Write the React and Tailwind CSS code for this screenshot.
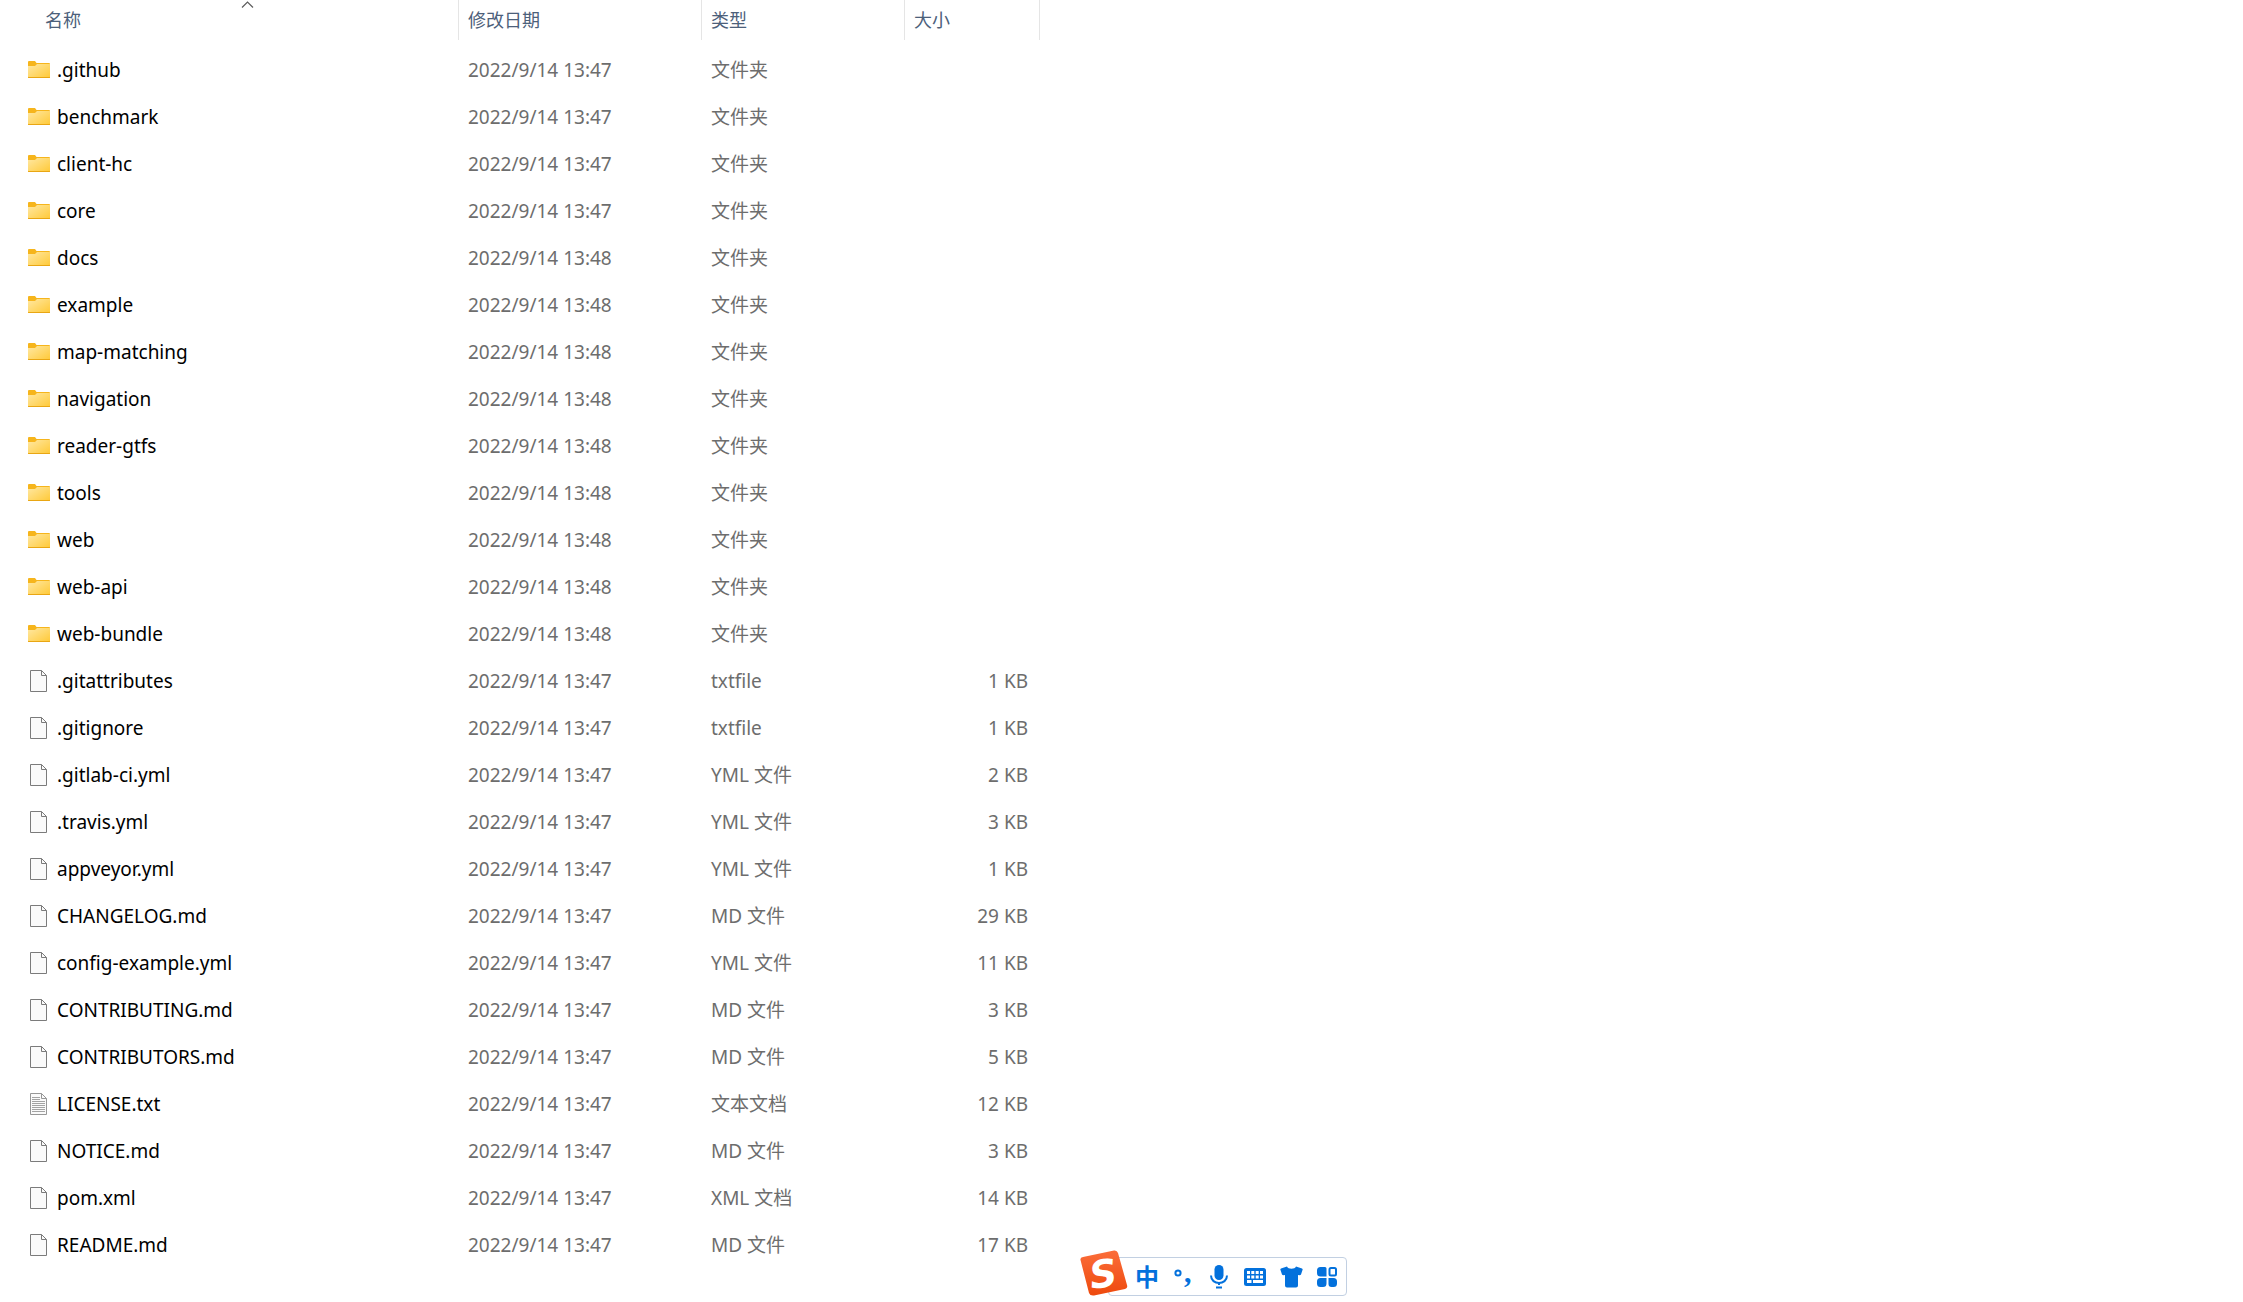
import React from 'react';

const entries = [
  { name: '.github', date: '2022/9/14 13:47', type: '文件夹', icon: 'folder' },
  { name: 'benchmark', date: '2022/9/14 13:47', type: '文件夹', icon: 'folder' },
  { name: 'client-hc', date: '2022/9/14 13:47', type: '文件夹', icon: 'folder' },
  { name: 'core', date: '2022/9/14 13:47', type: '文件夹', icon: 'folder' },
  { name: 'docs', date: '2022/9/14 13:48', type: '文件夹', icon: 'folder' },
  { name: 'example', date: '2022/9/14 13:48', type: '文件夹', icon: 'folder' },
  { name: 'map-matching', date: '2022/9/14 13:48', type: '文件夹', icon: 'folder' },
  { name: 'navigation', date: '2022/9/14 13:48', type: '文件夹', icon: 'folder' },
  { name: 'reader-gtfs', date: '2022/9/14 13:48', type: '文件夹', icon: 'folder' },
  { name: 'tools', date: '2022/9/14 13:48', type: '文件夹', icon: 'folder' },
  { name: 'web', date: '2022/9/14 13:48', type: '文件夹', icon: 'folder' },
  { name: 'web-api', date: '2022/9/14 13:48', type: '文件夹', icon: 'folder' },
  { name: 'web-bundle', date: '2022/9/14 13:48', type: '文件夹', icon: 'folder' },
  { name: '.gitattributes', date: '2022/9/14 13:47', type: 'txtfile', size: '1 KB', icon: 'file' },
  { name: '.gitignore', date: '2022/9/14 13:47', type: 'txtfile', size: '1 KB', icon: 'file' },
  { name: '.gitlab-ci.yml', date: '2022/9/14 13:47', type: 'YML 文件', size: '2 KB', icon: 'file' },
  { name: '.travis.yml', date: '2022/9/14 13:47', type: 'YML 文件', size: '3 KB', icon: 'file' },
  { name: 'appveyor.yml', date: '2022/9/14 13:47', type: 'YML 文件', size: '1 KB', icon: 'file' },
  { name: 'CHANGELOG.md', date: '2022/9/14 13:47', type: 'MD 文件', size: '29 KB', icon: 'file' },
  { name: 'config-example.yml', date: '2022/9/14 13:47', type: 'YML 文件', size: '11 KB', icon: 'file' },
  { name: 'CONTRIBUTING.md', date: '2022/9/14 13:47', type: 'MD 文件', size: '3 KB', icon: 'file' },
  { name: 'CONTRIBUTORS.md', date: '2022/9/14 13:47', type: 'MD 文件', size: '5 KB', icon: 'file' },
  { name: 'LICENSE.txt', date: '2022/9/14 13:47', type: '文本文档', size: '12 KB', icon: 'text' },
  { name: 'NOTICE.md', date: '2022/9/14 13:47', type: 'MD 文件', size: '3 KB', icon: 'file' },
  { name: 'pom.xml', date: '2022/9/14 13:47', type: 'XML 文档', size: '14 KB', icon: 'file' },
  { name: 'README.md', date: '2022/9/14 13:47', type: 'MD 文件', size: '17 KB', icon: 'file' },
];

function FolderIcon() {
  return (
    <svg width="22" height="18" viewBox="0 0 22 18" aria-hidden="true">
      <defs>
        <linearGradient id="folder-front" x1="0" y1="0" x2="1" y2="1">
          <stop offset="0" stopColor="#ffe8a3" />
          <stop offset="1" stopColor="#ffc937" />
        </linearGradient>
      </defs>
      <path d="M0 1Q0 0 1 0H7L8.5 2H21Q22 2 22 3V8H0Z" fill="#f6b51c" />
      <path d="M0 5H7L9 3H22V16Q22 17 21 17H1Q0 17 0 16Z" fill="url(#folder-front)" />
      <path d="M0 15.5V16.5Q0 17 1 17H21Q22 17 22 16.5V15.5Q22 16 21 16H1Q0 16 0 15.5Z" fill="#e9a613" />
    </svg>
  );
}

function FileIcon({ lined }) {
  return (
    <svg width="18" height="22" viewBox="0 0 18 22" aria-hidden="true">
      <path d="M0.5 0.5H11.5L16.5 5.5V21.5H0.5Z" fill="#fafafa" stroke={lined ? '#979797' : '#7b7b7b'} />
      <path d="M11.5 0.5V5.5H16.5" fill="none" stroke={lined ? '#979797' : '#7b7b7b'} />
      {lined && (
        <path
          d="M2 4.5H10M2 6.5H10M2 8.5H15M2 10.5H15M2 12.5H15M2 14.5H15M2 16.5H15M2 18.5H15"
          stroke="#a3a3a3"
        />
      )}
    </svg>
  );
}

function HeaderCell({ label, first, sorted }) {
  return (
    <th
      scope="col"
      aria-sort={sorted ? 'ascending' : undefined}
      className="relative border-r border-[#e5e5e5] p-0 text-left font-normal"
    >
      <button
        type="button"
        className={`flex h-10 w-full items-center text-lg text-[#4c607a] ${first ? 'pl-[45px]' : 'pl-[9px]'}`}
      >
        {label}
      </button>
      {sorted && (
        <svg className="absolute top-0 left-[241px]" width="13" height="9" viewBox="0 0 13 9" aria-hidden="true">
          <path d="M1 7.5L6.5 2L12 7.5" fill="none" stroke="#5c5c5c" strokeWidth="1.2" />
        </svg>
      )}
    </th>
  );
}

function EntryRow({ entry }) {
  return (
    <tr className="h-[47px]">
      <td className="p-0 pl-7 text-black">
        <div className="flex items-center gap-[7px]">
          <span className="flex w-[22px] shrink-0 justify-center">
            {entry.icon === 'folder' ? <FolderIcon /> : <FileIcon lined={entry.icon === 'text'} />}
          </span>
          <span>{entry.name}</span>
        </div>
      </td>
      <td className="p-0 pl-[9px]">{entry.date}</td>
      <td className="p-0 pl-[9px]">{entry.type}</td>
      <td className="p-0 pr-3 text-right">{entry.size}</td>
    </tr>
  );
}

function ImeLogo() {
  return (
    <svg className="overflow-visible" width="48" height="46" viewBox="0 0 48 46" role="img" aria-label="Sogou">
      <defs>
        <linearGradient id="ime-logo" x1="0" y1="0" x2="0" y2="1">
          <stop offset="0" stopColor="#fb6d3a" />
          <stop offset="1" stopColor="#ee4a0d" />
        </linearGradient>
      </defs>
      <path
        d="M3 7L34 0.5Q37 0 38 3L47 35Q48 38 45 39L14 45.5Q10 46 9 43L0.5 10Q0 7.5 3 7Z"
        fill="url(#ime-logo)"
      />
      <text
        x="23"
        y="37"
        textAnchor="middle"
        transform="rotate(-8 24 23)"
        fill="#fff"
        fontFamily="'DejaVu Sans', sans-serif"
        fontWeight="700"
        fontStyle="italic"
        fontSize="38"
      >
        S
      </text>
    </svg>
  );
}

function PunctuationIcon() {
  return (
    <svg className="overflow-visible" width="20" height="20" viewBox="0 0 20 20" aria-hidden="true">
      <circle cx="5" cy="6" r="2.6" fill="none" stroke="currentColor" strokeWidth="2" />
      <text x="11" y="15" fill="currentColor" fontFamily="'Liberation Serif', serif" fontWeight="700" fontSize="30">
        ,
      </text>
    </svg>
  );
}

function MicIcon() {
  return (
    <svg width="18" height="24" viewBox="0 0 18 24" aria-hidden="true">
      <rect x="4.5" y="0" width="9" height="15" rx="4.5" fill="currentColor" />
      <path d="M1 10.5C1 20.5 17 20.5 17 10.5" fill="none" stroke="currentColor" strokeWidth="2" />
      <path d="M9 18V20M6 22.5H12" stroke="currentColor" strokeWidth="2" />
    </svg>
  );
}

function KeyboardIcon() {
  return (
    <svg width="22" height="18" viewBox="0 0 22 18" aria-hidden="true">
      <rect width="22" height="18" rx="2.5" fill="currentColor" />
      <path
        d="M3 3h3v3h-3zM7.300 3h3v3h-3zM11.700 3h3v3h-3zM16 3h3v3h-3zM3 7.500h3v3h-3zM7.300 7.500h3v3h-3zM11.700 7.500h3v3h-3zM16 7.500h3v3h-3zM3 12h4.500v3h-4.500zM9 12h10v3H9z"
        fill="#fff"
      />
    </svg>
  );
}

function ShirtIcon() {
  return (
    <svg width="23" height="22" viewBox="0 0 23 22" aria-hidden="true">
      <path
        d="M7 0.5C8 3.5 15 3.5 16 0.5L22 2.5Q23 3 22.5 4L21 8.5Q20.5 9.5 18 9V19.5Q18 21.5 16 21.5H7Q5 21.5 5 19.5V9Q2.5 9.5 2 8.5L0.5 4Q0 3 1 2.5Z"
        fill="currentColor"
      />
    </svg>
  );
}

function ToolboxIcon() {
  return (
    <svg width="20" height="20" viewBox="0 0 20 20" aria-hidden="true">
      <path
        d="M3.500 0H8Q9.500 0 9.500 1.500V9.500H3.500Q0 9.500 0 6V3.500Q0 0 3.500 0ZM3.500 11H9.500V16.500Q9.500 20 6 20H3.500Q0 20 0 16.500V14.500Q0 11 3.500 11ZM11.500 11H16.500Q20 11 20 14.500V16.500Q20 20 16.500 20H14.500Q11.500 20 11.500 17Z"
        fill="currentColor"
      />
      <rect x="12.500" y="1" width="6.500" height="7.500" rx="1.500" fill="none" stroke="currentColor" strokeWidth="2" />
    </svg>
  );
}

const imeTools = [
  { label: '中文输入', content: <span className="text-2xl font-bold">中</span> },
  { label: '中文标点', content: <PunctuationIcon /> },
  { label: '语音', content: <MicIcon /> },
  { label: '软键盘', content: <KeyboardIcon /> },
  { label: '皮肤', content: <ShirtIcon /> },
  { label: '工具箱', content: <ToolboxIcon /> },
];

function ImeBar() {
  return (
    <div className="absolute top-[1250px] left-[1080px] flex items-end" role="toolbar" aria-label="输入法">
      <div className="z-10">
        <ImeLogo />
      </div>
      <div className="-ml-5 flex h-[39px] items-center rounded-sm border border-[#c2d0e2] bg-white pr-px pl-5">
        {imeTools.map((tool) => (
          <button
            key={tool.label}
            type="button"
            aria-label={tool.label}
            className="flex h-9 w-9 items-center justify-center text-[#0371dc]"
          >
            {tool.content}
          </button>
        ))}
      </div>
    </div>
  );
}

export default function App() {
  return (
    <main className="relative min-h-screen bg-white font-['Noto_Sans','Noto_Sans_CJK_SC',sans-serif]">
      <table className="table-fixed border-separate border-spacing-0 text-[19px] leading-6 text-[#6d6d6d]">
        <colgroup>
          <col className="w-[459px]" />
          <col className="w-[243px]" />
          <col className="w-[203px]" />
          <col className="w-[135px]" />
        </colgroup>
        <thead>
          <tr>
            <HeaderCell label="名称" first sorted />
            <HeaderCell label="修改日期" />
            <HeaderCell label="类型" />
            <HeaderCell label="大小" />
          </tr>
        </thead>
        <tbody className="before:block before:h-[6px]">
          {entries.map((entry) => (
            <EntryRow key={entry.name} entry={entry} />
          ))}
        </tbody>
      </table>
      <ImeBar />
    </main>
  );
}
